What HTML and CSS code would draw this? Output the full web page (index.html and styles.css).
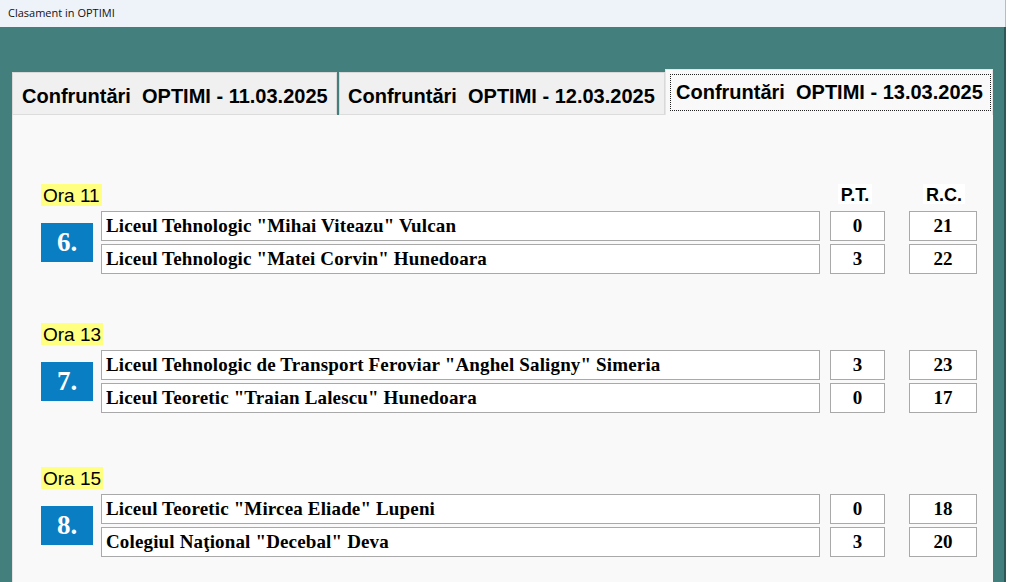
FILE: index.html
```html
<!DOCTYPE html>
<html lang="ro">
  <head>
    <meta charset="UTF-8" />
    <title>Clasament in OPTIMI</title>
    <link rel="stylesheet" href="styles.css">
  </head>

  <body>
    <div class="window">
      <div class="titlebar">Clasament in OPTIMI</div>
      <div class="client">
        <div class="tab-control">
          <div class="tab-strip">
            <div class="tab">Confruntări  OPTIMI - 11.03.2025</div>
            <div class="tab">Confruntări  OPTIMI - 12.03.2025</div>
            <div class="tab tab-active"><span class="tab-focus">Confruntări  OPTIMI - 13.03.2025</span></div>
          </div>

          <div class="tab-page">
            <div class="match">
              <div class="ora">Ora 11</div>
              <div class="col-head col-pt"><span>P.T.</span></div>
              <div class="col-head col-rc"><span>R.C.</span></div>
              <div class="match-no">6.</div>
              <div class="team">Liceul Tehnologic "Mihai Viteazu" Vulcan</div>
              <div class="score col-pt">0</div>
              <div class="score col-rc">21</div>
              <div class="team">Liceul Tehnologic "Matei Corvin" Hunedoara</div>
              <div class="score col-pt">3</div>
              <div class="score col-rc">22</div>
            </div>

            <div class="match">
              <div class="ora">Ora 13</div>
              <div class="match-no">7.</div>
              <div class="team">Liceul Tehnologic de Transport Feroviar "Anghel Saligny" Simeria</div>
              <div class="score col-pt">3</div>
              <div class="score col-rc">23</div>
              <div class="team">Liceul Teoretic "Traian Lalescu" Hunedoara</div>
              <div class="score col-pt">0</div>
              <div class="score col-rc">17</div>
            </div>

            <div class="match">
              <div class="ora">Ora 15</div>
              <div class="match-no">8.</div>
              <div class="team">Liceul Teoretic "Mircea Eliade" Lupeni</div>
              <div class="score col-pt">0</div>
              <div class="score col-rc">18</div>
              <div class="team">Colegiul Naţional "Decebal" Deva</div>
              <div class="score col-pt">3</div>
              <div class="score col-rc">20</div>
            </div>
          </div>
        </div>
      </div>
    </div>
  </body>
</html>
```

FILE: styles.css
```css
:root {
  --teal: #427f7d;
  --teal-edge: #2c5957;
  --page-bg: #f9f9f9;
  --tab-bg: #f0f0f0;
  --tab-border: #d9d9d9;
  --box-border: #a9a9a9;
  --badge: #0a7ec2;
  --ora-bg: #ffff80;
}

html,
body {
  margin: 0;
  height: 100%;
  overflow: hidden;
  background: #fff;
}

.window {
  width: 1006px;
  height: 100%;
  display: flex;
  flex-direction: column;
}

.titlebar {
  height: 27px;
  flex: none;
  box-sizing: border-box;
  padding: 5px 0 0 8px;
  background: #eef3f9;
  border-right: 1px solid #b8bcc2;
  font-family: "Open Sans", "Noto Sans", sans-serif;
  font-size: 11px;
  color: #111;
}

.client {
  flex: 1;
  background: var(--teal);
  border-right: 2px solid var(--teal-edge);
  padding: 42px 0 0 12px;
  min-height: 0;
}

.tab-control {
  width: 981px;
  height: 100%;
  display: flex;
  flex-direction: column;
}

/* tabs */
.tab-strip {
  display: flex;
  align-items: flex-end;
  height: 46px;
  flex: none;
  position: relative;
  z-index: 1;
}

.tab {
  height: 43px;
  box-sizing: border-box;
  width: 325px;
  padding: 12px 0 0 9px;
  background: var(--tab-bg);
  border: 1px solid var(--tab-border);
  border-bottom-color: #dcdcdc;
  font-family: "Liberation Sans", Arial, sans-serif;
  font-weight: bold;
  font-size: 20px;
  white-space: pre;
  color: #000;
}

.tab + .tab {
  margin-left: 2px;
  width: 326px;
  padding-left: 8px;
}

.tab.tab-active {
  height: 46px;
  width: 328px;
  margin-left: 0;
  padding: 4px 0 0 4px;
  background: var(--page-bg);
  border-bottom: none;
  border-color: #e6e6e6;
}

.tab-focus {
  display: block;
  width: 321px;
  height: 37px;
  box-sizing: border-box;
  padding: 7px 0 0 6px;
  outline: 1px dotted #222;
  outline-offset: -1px;
}

/* page */
.tab-page {
  flex: 1;
  background: var(--page-bg);
  border-left: 1px solid #e3e3e3;
  padding: 69px 0 0 28px;
  display: flex;
  flex-direction: column;
  gap: 49px;
}

.match {
  display: grid;
  grid-template-columns: 60px 729px 79px 68px;
  grid-template-rows: 24px 30px 30px;
  row-gap: 3px;
}

.match:last-child {
  margin-top: 5px;
}

.ora {
  grid-column: 1 / 3;
  grid-row: 1;
  justify-self: start;
  align-self: start;
  height: 22px;
  padding: 0 2px;
  background: var(--ora-bg);
  font-family: "Liberation Sans", Arial, sans-serif;
  font-size: 19px;
  line-height: 23px;
}

.col-head {
  grid-row: 1;
  align-self: start;
  text-align: center;
  font-family: "Liberation Sans", Arial, sans-serif;
  font-weight: bold;
  font-size: 18px;
  line-height: 20px;
}

.col-head span {
  display: inline-block;
  height: 20px;
  padding: 1px 3px 0;
  box-sizing: border-box;
  background: #fff;
}

.col-head.col-pt {
  width: 50px;
}

.col-head.col-rc {
  width: 70px;
}

.col-pt {
  grid-column: 3;
}

.col-rc {
  grid-column: 4;
}

.match-no {
  grid-column: 1;
  grid-row: 2 / 4;
  align-self: center;
  width: 52px;
  height: 39px;
  background: var(--badge);
  color: #fff;
  font-family: "Liberation Serif", "Times New Roman", serif;
  font-weight: bold;
  font-size: 27px;
  line-height: 39px;
  text-align: center;
}

.team,
.score {
  height: 30px;
  box-sizing: border-box;
  background: #fff;
  border: 1px solid var(--box-border);
  font-family: "Liberation Serif", "Times New Roman", serif;
  font-weight: bold;
  font-size: 19px;
  line-height: 27px;
  color: #000;
}

.team {
  grid-column: 2;
  width: 719px;
  padding-left: 4px;
  letter-spacing: 0.15px;
  white-space: nowrap;
}

.score {
  text-align: center;
}

.score.col-pt {
  width: 55px;
}

.score.col-rc {
  width: 68px;
}
```
